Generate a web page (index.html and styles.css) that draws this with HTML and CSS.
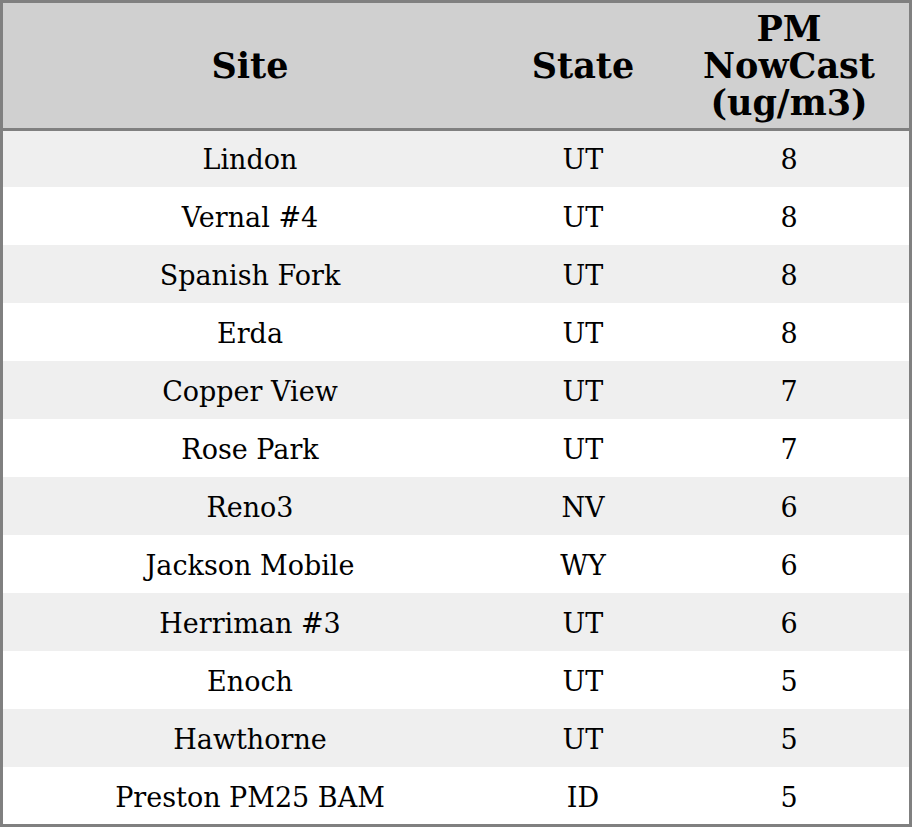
FILE: index.html
```html
<!DOCTYPE html>
<html>
<head>
<meta charset="utf-8">
<link rel="stylesheet" href="styles.css">
</head>
<body>
<table class="data">
  <thead>
    <tr><th class="c-site">Site</th><th class="c-state">State</th><th class="c-pm">PM<br>NowCast<br>(ug/m3)</th></tr>
  </thead>
  <tbody>
    <tr class="first"><td>Lindon</td><td>UT</td><td>8</td></tr>
    <tr><td>Vernal #4</td><td>UT</td><td>8</td></tr>
    <tr><td>Spanish Fork</td><td>UT</td><td>8</td></tr>
    <tr><td>Erda</td><td>UT</td><td>8</td></tr>
    <tr><td>Copper View</td><td>UT</td><td>7</td></tr>
    <tr><td>Rose Park</td><td>UT</td><td>7</td></tr>
    <tr><td>Reno3</td><td>NV</td><td>6</td></tr>
    <tr><td>Jackson Mobile</td><td>WY</td><td>6</td></tr>
    <tr><td>Herriman #3</td><td>UT</td><td>6</td></tr>
    <tr><td>Enoch</td><td>UT</td><td>5</td></tr>
    <tr><td>Hawthorne</td><td>UT</td><td>5</td></tr>
    <tr class="last"><td>Preston PM25 BAM</td><td>ID</td><td>5</td></tr>
  </tbody>
</table>
</body>
</html>
```

FILE: styles.css
```css
html, body {
  margin: 0;
  padding: 0;
  background: #ffffff;
}
.data {
  width: 912px;
  border-collapse: collapse;
  border: 3px solid #808080;
  font-family: "DejaVu Serif", serif;
  color: #000;
}
.data th {
  background: #d0d0d0;
  font-size: 35px;
  font-weight: bold;
  line-height: 37px;
  padding: 7px 0 7px;
  border-bottom: 3px solid #808080;
  text-align: center;
}
.c-site { width: 494px; }
.c-state { width: 172px; }
.c-pm { width: 240px; }
.data td {
  font-size: 27px;
  line-height: 32px;
  padding: 15px 0 11px;
  text-align: center;
}
.data tr.first td {
  padding-top: 13px;
}
.data tr.last td {
  padding-bottom: 10px;
}
.data tbody tr:nth-child(odd) td {
  background: #efefef;
}
```
